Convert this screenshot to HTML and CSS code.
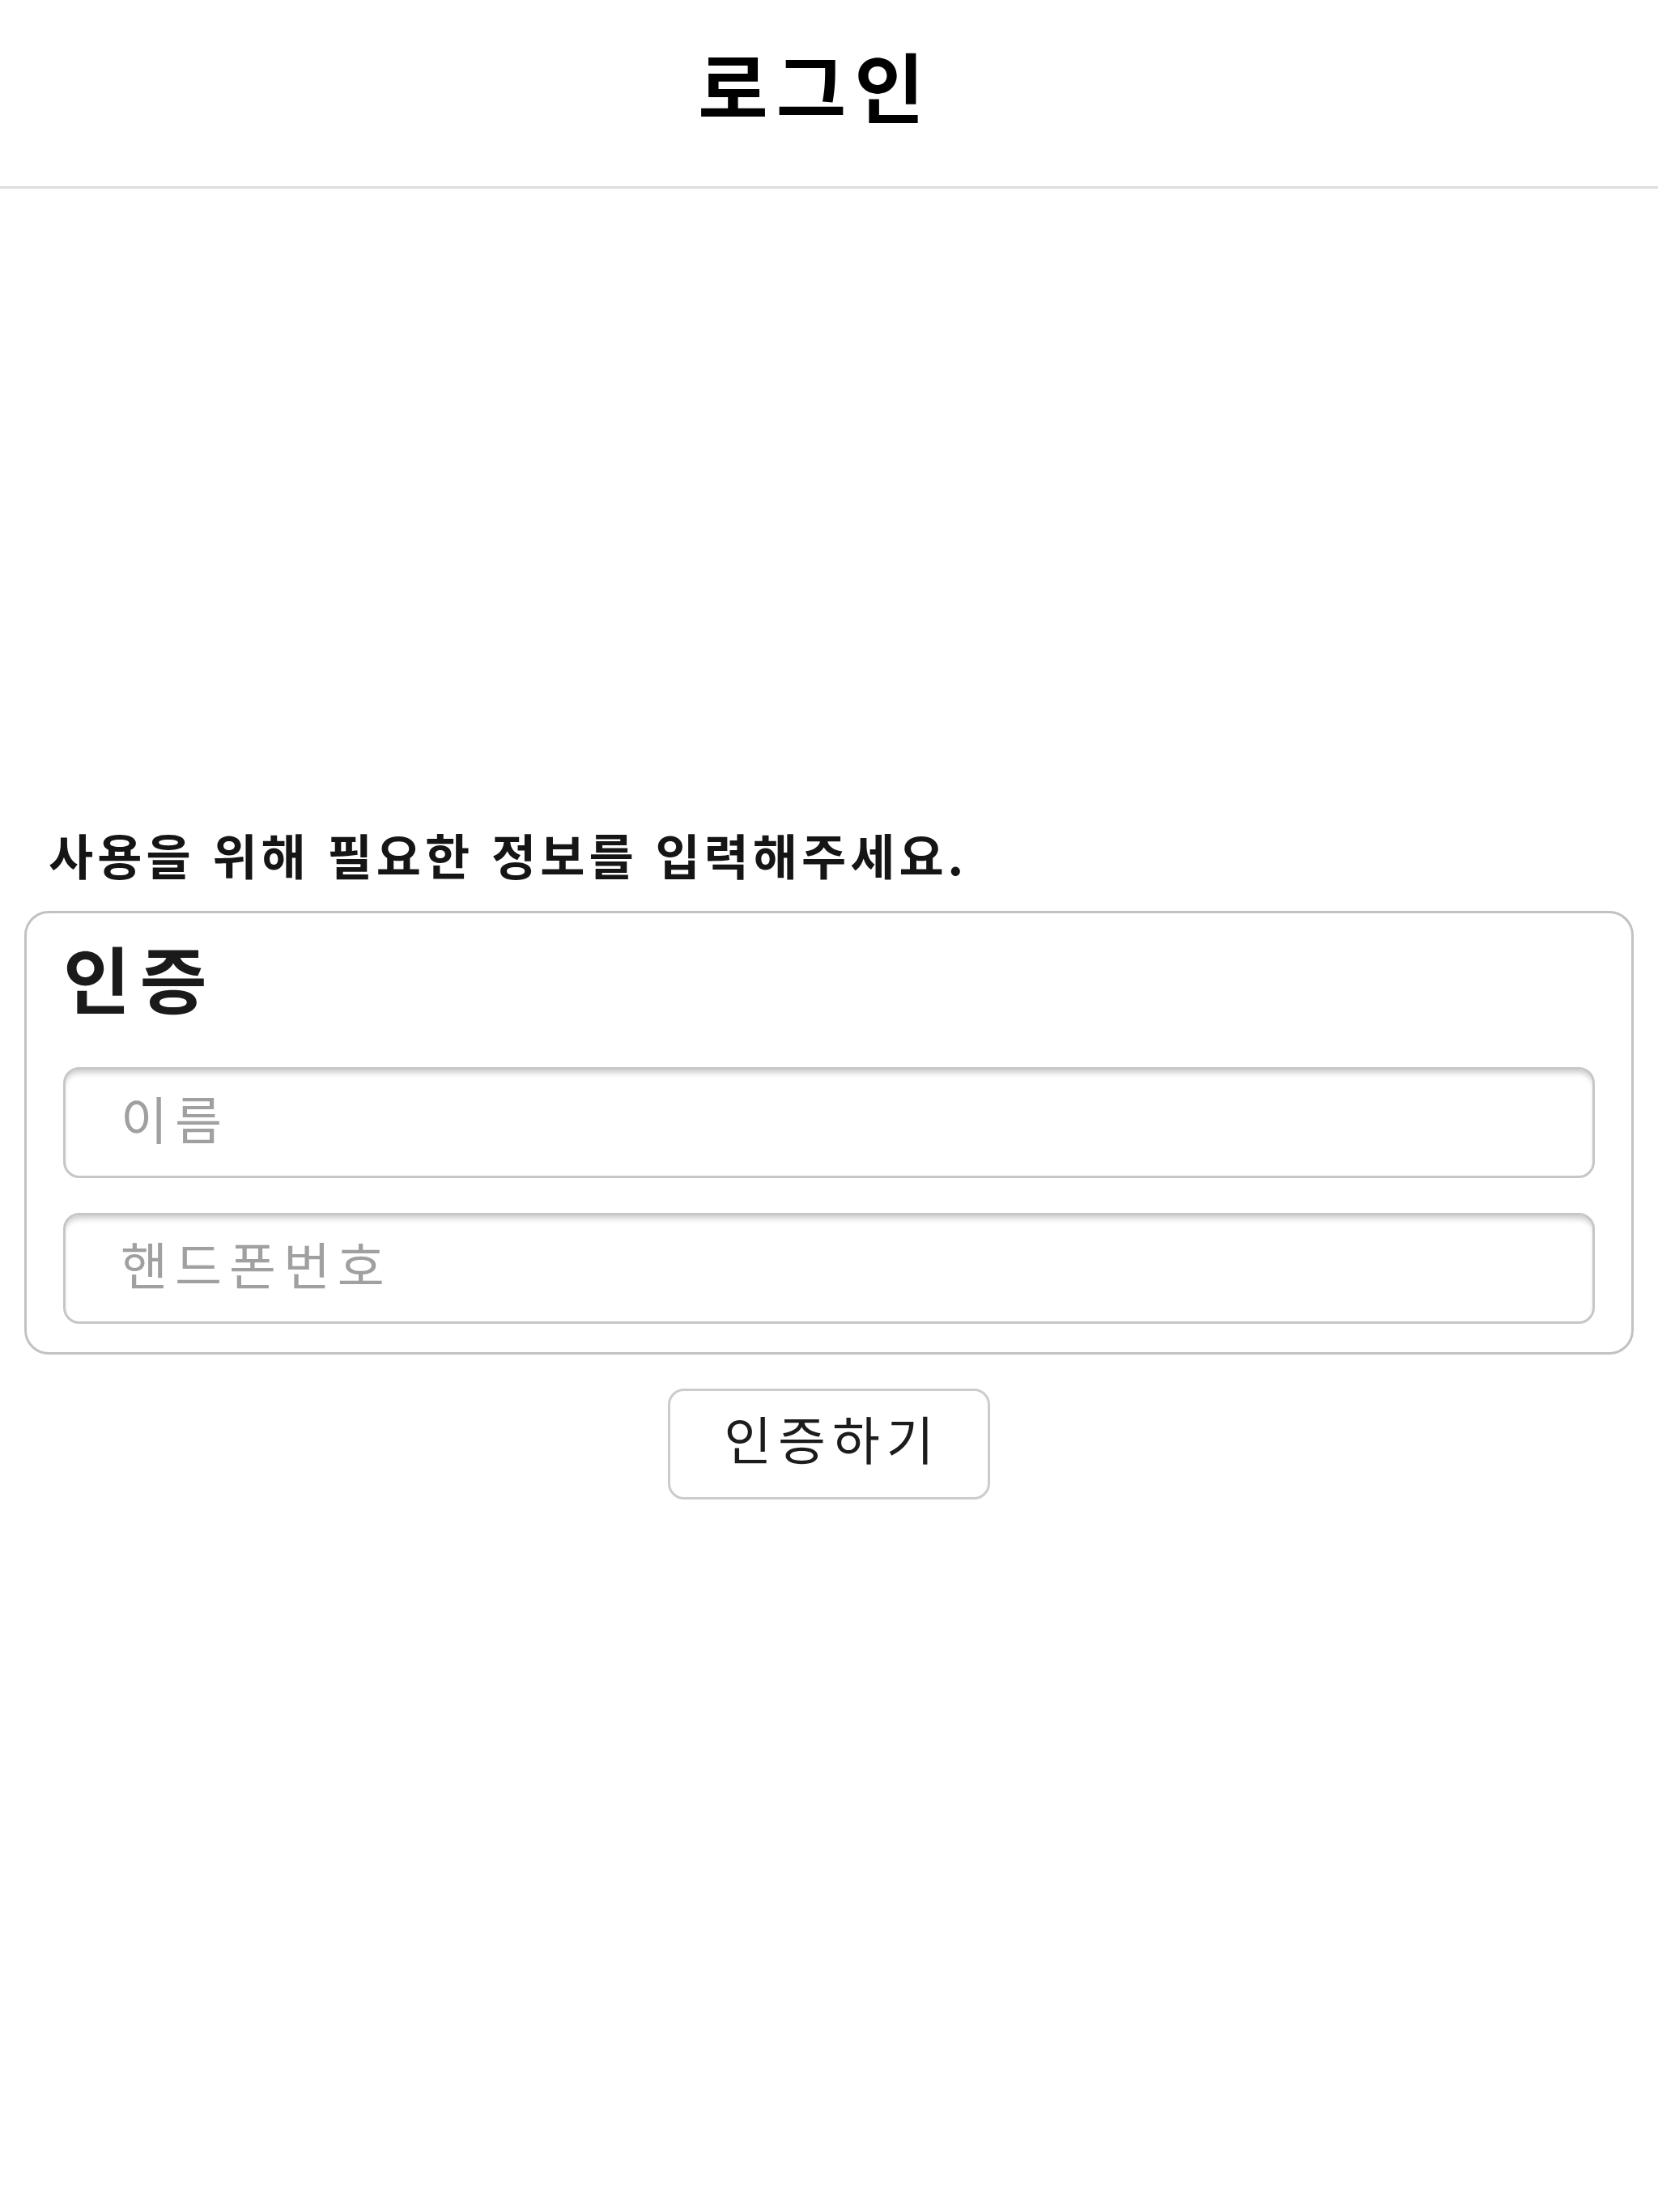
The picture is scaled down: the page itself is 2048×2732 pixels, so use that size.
FILE: index.html
```
<!DOCTYPE html>
<html lang="ko">
<head>
<meta charset="utf-8">
<title>로그인</title>
<link rel="stylesheet" href="styles.css">
</head>
<body>
<header class="topbar">
  <h1 class="topbar-title">로그인</h1>
</header>
<main class="content">
  <p class="notice">사용을 위해 필요한 정보를 입력해주세요.</p>
  <section class="card">
    <h2 class="card-title">인증</h2>
    <input class="field" type="text" placeholder="이름">
    <input class="field" type="tel" placeholder="핸드폰번호">
  </section>
  <div class="actions">
    <button class="btn" type="button">인증하기</button>
  </div>
</main>
</body>
</html>
```

FILE: styles.css
```
html, body {
  margin: 0;
  padding: 0;
  background: #ffffff;
}

body {
  font-family: "Noto Sans CJK KR", "Noto Sans", sans-serif;
  color: #111111;
  width: 2048px;
  min-height: 2732px;
}

.topbar {
  box-sizing: border-box;
  height: 233px;
  padding-bottom: 22px;
  border-bottom: 3px solid #dedede;
  display: flex;
  align-items: center;
  justify-content: center;
}

.topbar-title {
  margin: 0;
  padding-right: 34px;
  font-size: 94px;
  font-weight: 700;
  line-height: 1;
  letter-spacing: 10px;
  color: #000;
}

.content {
  display: flex;
  flex-direction: column;
}

.notice {
  margin: 782px 0 30px 0;
  padding-left: 60px;
  font-size: 60px;
  line-height: 80px;
  font-weight: 700;
  letter-spacing: 5px;
  color: #151515;
}

.card {
  margin: 0 30px;
  border: 3px solid #c2c2c2;
  border-radius: 30px;
  padding: 28px 45px 35px 45px;
  display: flex;
  flex-direction: column;
  gap: 43px;
}

.card-title {
  margin: 0 0 19px 0;
  font-size: 90px;
  line-height: 100px;
  font-weight: 600;
  letter-spacing: 12px;
  color: #1a1a1a;
}

.field {
  box-sizing: border-box;
  width: 100%;
  height: 137px;
  margin: 0;
  border: 3px solid #c6c6c6;
  border-radius: 20px;
  padding: 0 20px 14px 68px;
  font-family: inherit;
  font-size: 63px;
  letter-spacing: 9px;
  color: #222;
  background: #fff;
  box-shadow: inset 0 7px 7px -3px rgba(0, 0, 0, 0.2);
  outline: none;
}

.field::placeholder {
  color: #a0a0a0;
}

.actions {
  display: flex;
  justify-content: center;
  margin-top: 42px;
}

.btn {
  box-sizing: border-box;
  width: 398px;
  height: 137px;
  border: 3px solid #cccccc;
  border-radius: 20px;
  background: #fff;
  font-family: inherit;
  font-size: 64px;
  letter-spacing: 8px;
  color: #1c1c1c;
  padding: 0 0 18px 8px;
}
```
